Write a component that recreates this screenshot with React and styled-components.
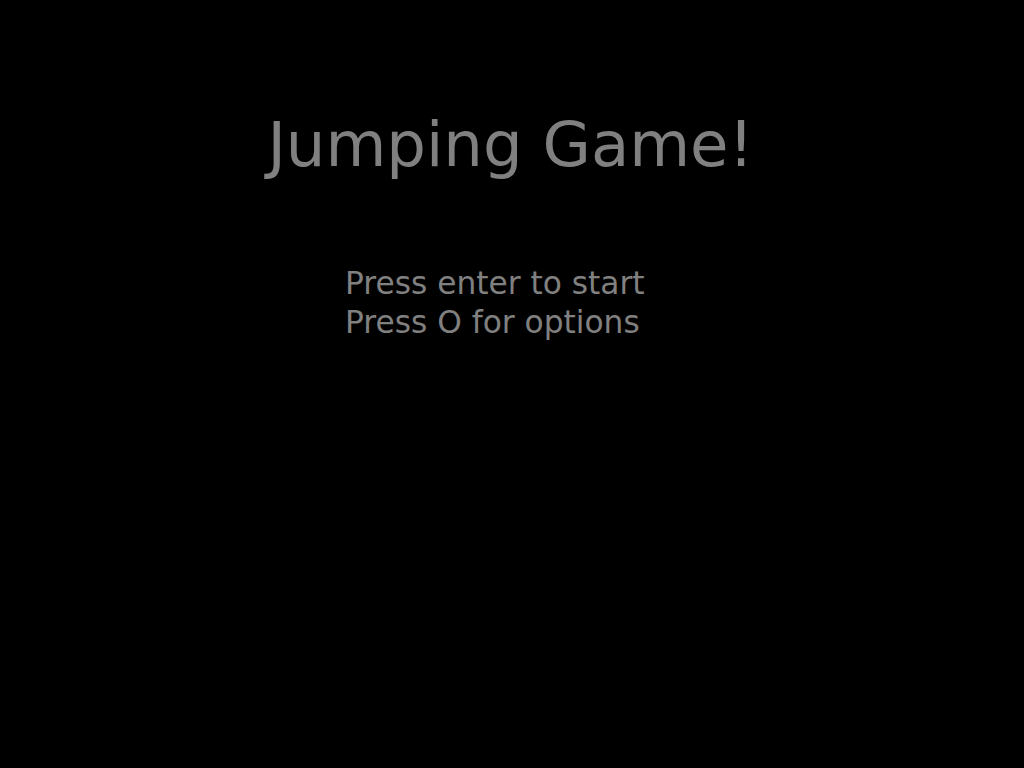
import React from "react";
import styled, { createGlobalStyle } from "styled-components";

const Global = createGlobalStyle`
  html, body { margin: 0; padding: 0; background: #000; }
  body { font-family: "DejaVu Sans", sans-serif; }
`;

const Screen = styled.div`
  width: 1024px;
  height: 768px;
  background: #000;
  display: flex;
  flex-direction: column;
  align-items: center;
  padding-top: 108px;
  box-sizing: border-box;
`;

const Title = styled.h1`
  margin: 0;
  font-family: "DejaVu Sans", sans-serif;
  font-weight: normal;
  font-size: 62.5px;
  line-height: 74px;
  color: #808080;
  margin-left: -3px;
`;

const Menu = styled.div`
  align-self: flex-start;
  margin-left: 345px;
  margin-top: 82px;
  display: flex;
  flex-direction: column;
`;

const MenuLine = styled.div`
  font-family: "DejaVu Sans", sans-serif;
  font-size: 31.25px;
  line-height: 39px;
  color: #808080;
`;

export default function App() {
  return (
    <>
      <Global />
      <Screen>
        <Title>Jumping Game!</Title>
        <Menu>
          <MenuLine>Press enter to start</MenuLine>
          <MenuLine>Press O for options</MenuLine>
        </Menu>
      </Screen>
    </>
  );
}
